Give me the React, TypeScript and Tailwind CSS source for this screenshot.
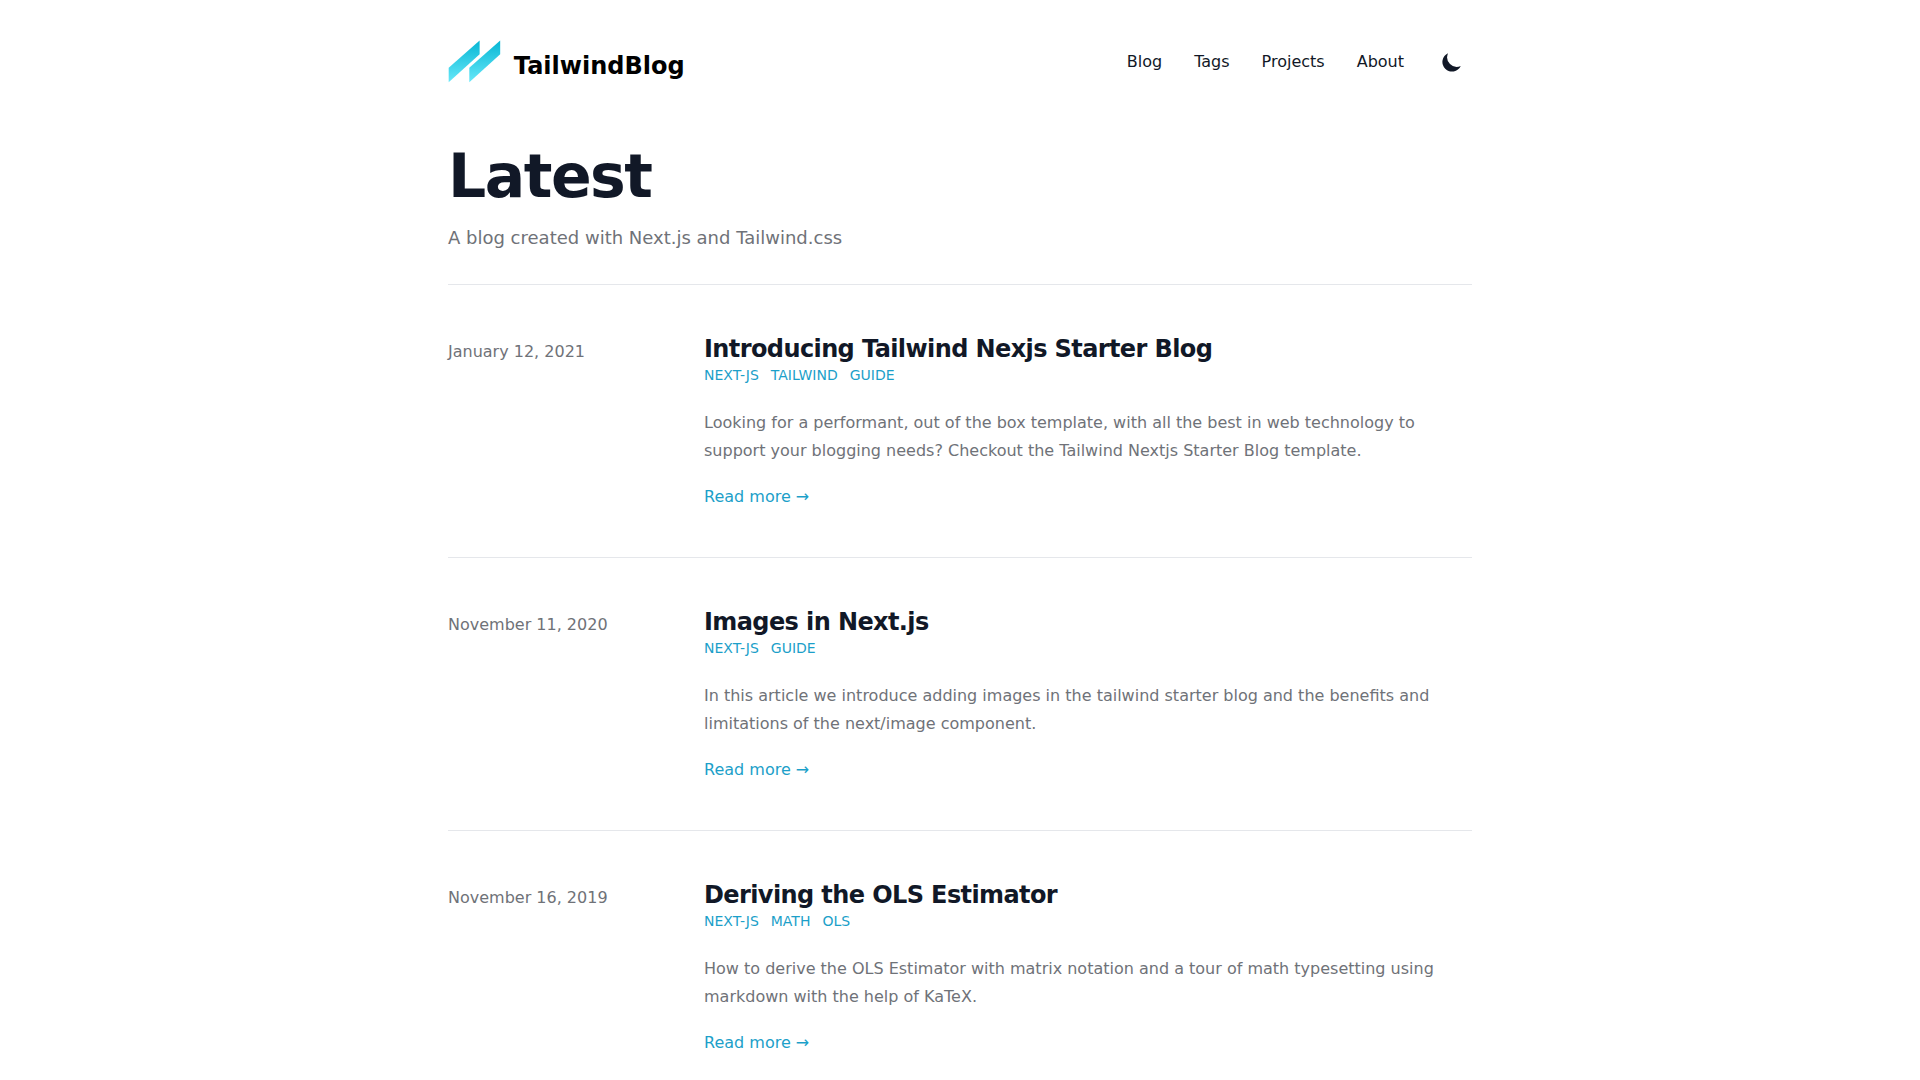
import React from 'react';

interface Post {
  slug: string;
  date: string;
  dateTime: string;
  title: string;
  summary: string;
  tags: string[];
}

const headerNavLinks = [
  { href: '#blog', title: 'Blog' },
  { href: '#tags', title: 'Tags' },
  { href: '#projects', title: 'Projects' },
  { href: '#about', title: 'About' },
];

const posts: Post[] = [
  {
    slug: 'introducing-tailwind-nextjs-starter-blog',
    date: 'January 12, 2021',
    dateTime: '2021-01-12',
    title: 'Introducing Tailwind Nexjs Starter Blog',
    summary:
      'Looking for a performant, out of the box template, with all the best in web technology to support your blogging needs? Checkout the Tailwind Nextjs Starter Blog template.',
    tags: ['next-js', 'tailwind', 'guide'],
  },
  {
    slug: 'guide-to-using-images-in-nextjs',
    date: 'November 11, 2020',
    dateTime: '2020-11-11',
    title: 'Images in Next.js',
    summary:
      'In this article we introduce adding images in the tailwind starter blog and the benefits and limitations of the next/image component.',
    tags: ['next-js', 'guide'],
  },
  {
    slug: 'deriving-ols-estimator',
    date: 'November 16, 2019',
    dateTime: '2019-11-16',
    title: 'Deriving the OLS Estimator',
    summary:
      'How to derive the OLS Estimator with matrix notation and a tour of math typesetting using markdown with the help of KaTeX.',
    tags: ['next-js', 'math', 'ols'],
  },
];

const Logo = () => (
  <svg viewBox="344.564 330.278 111.737 91.218" width="53.87" height="43.61" aria-hidden="true">
    <defs>
      <linearGradient id="logo-fill" gradientUnits="userSpaceOnUse" x1="420.97" y1="331.28" x2="420.97" y2="418.5">
        <stop offset="0" stopColor="#06b6d4" />
        <stop offset="1" stopColor="#67e8f9" />
      </linearGradient>
    </defs>
    <g fill="url(#logo-fill)">
      <path d="M453.3 331.28v28.57l-64.66 58.65v-30.08z" />
      <path d="M410.23 331.28v28.57l-64.67 58.65v-30.08z" />
    </g>
  </svg>
);

const ThemeSwitch = () => (
  <button type="button" aria-label="Toggle Dark Mode" className="mr-1 ml-4 h-8 w-8 rounded p-1">
    <svg viewBox="0 0 20 20" fill="currentColor" className="text-[#111827]">
      <path d="M17.293 13.293A8 8 0 016.707 2.707a8.001 8.001 0 1010.586 10.586z" />
    </svg>
  </button>
);

const PostItem = ({ post }: { post: Post }) => (
  <li className="py-12">
    <article className="grid grid-cols-4 items-baseline">
      <time dateTime={post.dateTime} className="text-base leading-6 text-[#6f7278]">
        {post.date}
      </time>
      <div className="col-span-3 space-y-5">
        <div className="space-y-6">
          <div>
            <h2 className="text-2xl leading-8 font-bold tracking-tight">
              <a href={`#${post.slug}`} className="text-[#111827]">
                {post.title}
              </a>
            </h2>
            <div className="flex flex-wrap">
              {post.tags.map((tag) => (
                <a key={tag} href={`#${tag}`} className="mr-3 text-sm text-[#1c9fc9] uppercase">
                  {tag}
                </a>
              ))}
            </div>
          </div>
          <p className="text-base leading-7 text-[#6f7278]">{post.summary}</p>
        </div>
        <div className="text-base leading-6">
          <a href={`#${post.slug}`} className="text-[#1c9fc9]" aria-label={`Read "${post.title}"`}>
            Read more →
          </a>
        </div>
      </div>
    </article>
  </li>
);

export default function App() {
  return (
    <div className="min-h-screen bg-white font-['DejaVu_Sans',sans-serif] antialiased">
      <div className="mx-auto max-w-5xl">
        <header className="flex items-center justify-between py-10">
          <a href="#home" aria-label="TailwindBlog" className="flex items-center justify-between">
            <div className="mr-3">
              <Logo />
            </div>
            <div className="h-6 text-2xl font-semibold text-black">TailwindBlog</div>
          </a>
          <div className="flex items-center text-base leading-5">
            <nav>
              {headerNavLinks.map((link) => (
                <a key={link.title} href={link.href} className="p-4 text-[#111827]">
                  {link.title}
                </a>
              ))}
            </nav>
            <ThemeSwitch />
          </div>
        </header>
        <main className="divide-y divide-gray-200">
          <div className="space-y-5 pt-6 pb-8">
            <h1 className="text-6xl leading-14 font-extrabold tracking-tight text-[#111827]">Latest</h1>
            <p className="text-lg leading-7 text-[#6f7278]">A blog created with Next.js and Tailwind.css</p>
          </div>
          <ul className="divide-y divide-gray-200">
            {posts.map((post) => (
              <PostItem key={post.slug} post={post} />
            ))}
          </ul>
        </main>
      </div>
    </div>
  );
}
